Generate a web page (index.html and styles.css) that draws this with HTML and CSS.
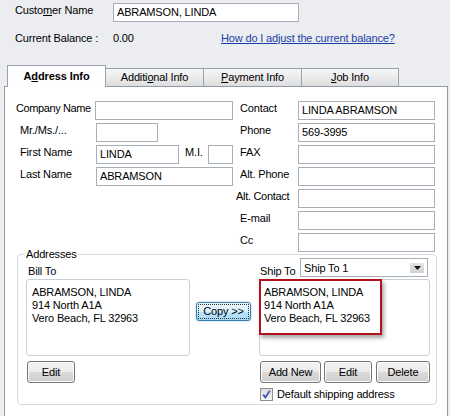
FILE: index.html
```html
<!DOCTYPE html>
<html>
<head>
<meta charset="utf-8">
<link rel="stylesheet" href="styles.css">
</head>
<body>
<div class="top">
  <div class="hrow r1">
    <span class="hlabel">Custo<u>m</u>er Name</span>
    <div class="in cust">ABRAMSON, LINDA</div>
  </div>
  <div class="hrow r2">
    <span class="hlabel">Current Balance :</span>
    <span class="bal">0.00</span>
    <a class="link" href="#">How do I adjust the current balance?</a>
  </div>
</div>

<div class="tabs">
  <div class="tab active">A<u>d</u>dress Info</div>
  <div class="tab">Additi<u>o</u>nal Info</div>
  <div class="tab"><u>P</u>ayment Info</div>
  <div class="tab last"><u>J</u>ob Info</div>
</div>

<div class="panel">
  <div class="fields">
    <div class="col left">
      <div class="frow"><span class="lbl company">Company Name</span><div class="in w138"></div></div>
      <div class="frow"><span class="lbl">Mr./Ms./...</span><div class="in w62"></div></div>
      <div class="frow"><span class="lbl">First Name</span><div class="in w83">LINDA</div><span class="mi">M.I.</span><div class="in w25"></div></div>
      <div class="frow"><span class="lbl">Last Name</span><div class="in w137">ABRAMSON</div></div>
    </div>
    <div class="col right">
      <div class="frow"><span class="rlbl">Contact</span><div class="in w137">LINDA ABRAMSON</div></div>
      <div class="frow"><span class="rlbl">Phone</span><div class="in w137">569-3995</div></div>
      <div class="frow"><span class="rlbl">FAX</span><div class="in w137"></div></div>
      <div class="frow"><span class="rlbl">Alt. Phone</span><div class="in w137"></div></div>
      <div class="frow"><span class="rlbl alt">Alt. Contact</span><div class="in w137"></div></div>
      <div class="frow"><span class="rlbl">E-mail</span><div class="in w137"></div></div>
      <div class="frow"><span class="rlbl">Cc</span><div class="in w137"></div></div>
    </div>
  </div>

  <div class="group">
    <span class="legend">Addresses</span>
    <div class="gcols">
      <div class="bill">
        <div class="ghead"><span class="glbl">Bill To</span></div>
        <div class="addr">
          <div class="atext">ABRAMSON, LINDA<br>914 North A1A<br>Vero Beach, FL 32963</div>
        </div>
        <div class="btns"><button class="btn edit1">Edit</button></div>
      </div>
      <div class="mid">
        <button class="copy"><span class="focus">Copy &gt;&gt;</span></button>
      </div>
      <div class="ship">
        <div class="ghead">
          <span class="glbl shiplbl">Ship To</span>
          <div class="select">
            <span>Ship To 1</span>
            <span class="arrow"><svg width="7" height="4" viewBox="0 0 7 4"><path d="M0 0H7L3.5 4Z" fill="#111"/></svg></span>
          </div>
        </div>
        <div class="addr">
          <div class="redbox">ABRAMSON, LINDA<br>914 North A1A<br>Vero Beach, FL 32963</div>
        </div>
        <div class="btns">
          <button class="btn addnew">Add New</button>
          <button class="btn edit2">Edit</button>
          <button class="btn del">Delete</button>
        </div>
        <div class="chkrow">
          <span class="chk"><svg width="11" height="11" viewBox="0 0 11 11"><path d="M2.2 5.6 L4.4 8.4 L8.8 1.8" fill="none" stroke="#3d5aa8" stroke-width="1.8"/></svg></span>
          <span>Default shipping address</span>
        </div>
      </div>
    </div>
  </div>
</div>
</body>
</html>
```

FILE: styles.css
```css
* { box-sizing: border-box; }
html, body { margin: 0; padding: 0; }
body {
  width: 450px;
  height: 416px;
  overflow: hidden;
  background: #ebedf1;
  font-family: "Liberation Sans", Arial, sans-serif;
  font-size: 11px;
  letter-spacing: -0.15px;
  color: #000;
}
u { text-decoration: underline; text-underline-offset: 1px; }

.top { padding: 3px 0 0 15px; }
.hrow { display: flex; align-items: flex-start; }
.r1 { height: 19px; }
.r2 { margin-top: 9px; line-height: 14px; }
.hlabel { width: 98px; line-height: 15px; white-space: nowrap; }
.bal { width: 108px; line-height: 14px; }
.link { color: #1a3fa6; text-decoration: underline; line-height: 14px; white-space: nowrap; }

.in {
  height: 19px;
  border: 1px solid #a9afb8;
  background: #fff;
  padding-left: 3px;
  line-height: 17px;
  white-space: nowrap;
  overflow: hidden;
}
.cust { width: 186px; }

.tabs {
  display: flex;
  align-items: flex-end;
  margin: 19px 0 0 7px;
  height: 21px;
}
.tab {
  width: 98px;
  height: 18px;
  border: 1px solid #98a2ae;
  border-bottom: none;
  border-left: none;
  background: linear-gradient(#f7f7f7, #dedede);
  text-align: center;
  line-height: 17px;
}
.tab.last { width: 97px; }
.tab.active {
  position: relative;
  z-index: 1;
  width: 99px;
  height: 22px;
  margin-bottom: -1px;
  border-left: 1px solid #98a2ae;
  background: linear-gradient(#fdfdfd, #ffffff);
  font-weight: bold;
  line-height: 21px;
  letter-spacing: -0.1px;
}

.panel {
  margin-left: 4px;
  width: 444px;
  height: 340px;
  border: 1px solid #8f9aa7;
  background: #fff;
  padding: 14px 0 0 11px;
}
.fields { display: flex; }
.col.left { width: 220px; }
.frow { display: flex; align-items: flex-start; height: 19px; margin-bottom: 3px; }
.lbl { width: 80px; padding-left: 4px; line-height: 14px; white-space: nowrap; }
.lbl.company { width: 79px; padding-left: 0; letter-spacing: -0.4px; }
.mi { width: 23px; margin-left: 6px; line-height: 14px; }
.w138 { width: 138px; }
.w62 { width: 62px; }
.w83 { width: 83px; }
.w25 { width: 25px; }
.w137 { width: 137px; }
.rlbl { width: 62px; padding-left: 4px; line-height: 14px; white-space: nowrap; }
.rlbl.alt { padding-left: 0; letter-spacing: -0.3px; }
.col.right .frow:last-child { margin-bottom: 0; }

.group {
  position: relative;
  margin: 2px 0 0 1px;
  width: 420px;
  border: 1px solid #d3dae1;
  border-radius: 4px;
  padding: 3px 6px 3px 8px;
}
.legend {
  position: absolute;
  top: -8px;
  left: 7px;
  background: #fff;
  padding: 0 1px;
  line-height: 14px;
}
.gcols { display: flex; }
.bill { width: 164px; }
.mid { width: 69px; padding-top: 44px; }
.ship { width: 171px; }
.ghead { display: flex; align-items: flex-end; height: 19px; margin-bottom: 2px; }
.glbl { line-height: 14px; padding-left: 2px; margin-bottom: -1px; white-space: nowrap; }
.shiplbl { width: 41px; padding-left: 1px; }
.select {
  width: 128px;
  height: 19px;
  border: 1px solid #a9afb8;
  background: #fff;
  display: flex;
  align-items: center;
  justify-content: space-between;
  padding: 0 2px 0 3px;
}
.arrow {
  width: 14px;
  height: 10px;
  background: linear-gradient(#e6e6e6, #d0d0d0);
  display: flex;
  align-items: center;
  justify-content: center;
  margin-right: 1px;
}
.arrow svg { display: block; }

.addr {
  height: 77px;
  border: 1px solid #c8d0d8;
  border-radius: 3px;
  background: #fff;
  line-height: 13px;
  white-space: nowrap;
}
.atext { padding: 6px 0 0 5px; }
.redbox {
  margin: -1px 0 0 -1px;
  width: 123px;
  height: 56px;
  border: 2px solid #b3121c;
  box-shadow: 2px 3px 4px rgba(0,0,0,0.35);
  padding: 5px 0 0 3px;
}

.btns { display: flex; margin-top: 5px; height: 22px; }
.btn {
  height: 22px;
  border: 1px solid #767676;
  border-radius: 3px;
  background: linear-gradient(#f4f4f4 0%, #ebebeb 50%, #dadada 51%, #cfcfcf 100%);
  font: inherit;
  letter-spacing: inherit;
  color: #000;
  padding: 0;
  box-shadow: inset 0 0 0 1px #fcfcfc;
}
.edit1 { width: 48px; margin-left: 1px; }
.addnew { width: 61px; margin-left: 1px; }
.edit2 { width: 48px; margin-left: 3px; }
.del { width: 54px; margin-left: 4px; }

.copy {
  margin-left: 6px;
  width: 55px;
  height: 19px;
  border: 1px solid #3c7fb1;
  border-radius: 3px;
  background: linear-gradient(#eaf6fd 0%, #d9f0fc 50%, #bee6fd 51%, #a7d9f5 100%);
  box-shadow: 0 0 2px #7fc3ec;
  font: inherit;
  letter-spacing: inherit;
  color: #000;
  padding: 1px;
  display: flex;
}
.focus {
  flex: 1;
  border: 1px dotted #333;
  line-height: 13px;
  text-align: center;
  white-space: nowrap;
}

.chkrow { display: flex; align-items: center; margin-top: 5px; height: 13px; padding-left: 1px; line-height: 13px; white-space: nowrap; }
.chk {
  width: 13px;
  height: 13px;
  border: 1px solid #8e8f8f;
  background: linear-gradient(#dcdcdc, #f6f6f6);
  display: flex;
  align-items: center;
  justify-content: center;
  margin-right: 4px;
}
.chk svg { display: block; }
```
